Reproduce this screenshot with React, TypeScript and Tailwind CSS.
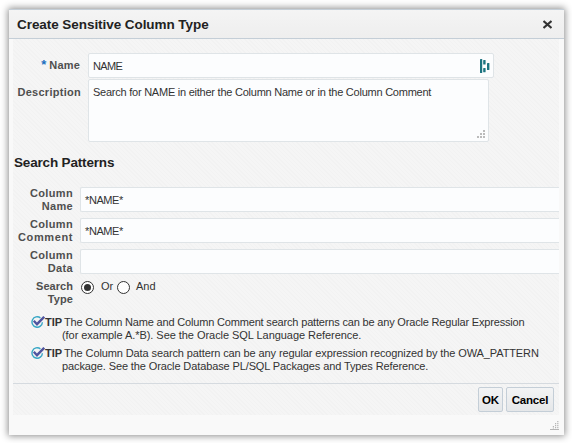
const stripes =
  "bg-[#f4f4f4] bg-[repeating-linear-gradient(45deg,#f2f2f2_0px,#f2f2f2_1px,#f5f5f5_1px,#f5f5f5_3px)]";

type Line = { text: string; tracking?: string };

function Label({ lines }: { lines: Line[] }) {
  return (
    <div className="w-[60px] shrink-0 text-right font-bold whitespace-nowrap text-[#4f4f4f]">
      {lines.map(({ text, tracking = "tracking-[0.35px]" }) => (
        <div key={text} className={tracking}>
          {text}
        </div>
      ))}
    </div>
  );
}

function PatternRow({ lines, value }: { lines: Line[]; value: string }) {
  return (
    <div className="flex h-[31px]">
      <Label lines={lines} />
      <div className="ml-[7px] flex h-[25px] flex-1 items-center rounded-l-[2px] border border-r-0 border-[#dfe4e7] bg-[#fcfdfe] pt-px pl-1 tracking-[-0.4px] text-[#333]">
        {value}
      </div>
    </div>
  );
}

function TipIcon() {
  return (
    <svg width="14" height="13" viewBox="0 0 14 13" fill="none" className="shrink-0">
      <path d="M9.4 1.9A5.2 5.2 0 1 0 11.4 6.2" stroke="#37a6c5" strokeWidth="1.4" />
      <path d="M2.8 4.8 6 8.2 13.2 .8" stroke="#4f559f" strokeWidth="2.4" />
    </svg>
  );
}

function Tip({ first, second }: { first: Line; second: Line }) {
  return (
    <div className="flex h-[31px] whitespace-nowrap text-[#333]">
      <TipIcon />
      <div>
        <div className="flex">
          <b className="w-[19px]">TIP</b>
          <span className={first.tracking}>{first.text}</span>
        </div>
        <div className={`pl-[17px] ${second.tracking}`}>{second.text}</div>
      </div>
    </div>
  );
}

function Radio({ checked }: { checked?: boolean }) {
  return (
    <span className="flex h-[13px] w-[13px] items-center justify-center rounded-full border border-[#333] bg-white">
      {checked && <span className="h-[7px] w-[7px] rounded-full bg-[#333]" />}
    </span>
  );
}

function Button({ children, width }: { children: string; width: string }) {
  return (
    <button
      className={`${width} flex h-[25px] items-center justify-center rounded-[2px] border border-[#c4ced7] bg-linear-to-b from-[#f3f4f5] to-[#e5e7e9] pt-px text-[11.5px] font-bold tracking-[-0.2px] text-black`}
    >
      {children}
    </button>
  );
}

export default function App() {
  return (
    <div className="h-[443px] w-[572px] overflow-hidden bg-white pt-[9px] pl-[9px] font-['Liberation_Sans',Arial,sans-serif] text-[11px] leading-[13px]">
      <div className="flex h-[426px] w-[555px] flex-col bg-[#f9f9f9] shadow-[0_0_7px_1px_rgba(0,0,0,0.45)]">
        <header className="flex h-[30px] shrink-0 items-center justify-between border-y border-[#c4ced7] bg-linear-to-b from-[#f4f4f4] to-[#eeeeee] pr-3 pl-2">
          <h1 className="text-[13.5px] font-bold tracking-[-0.06px] text-[#222]">Create Sensitive Column Type</h1>
          <svg width="9" height="9" viewBox="0 0 9 9" stroke="#333" strokeWidth="2.2">
            <path d="M.5 1 8.5 8M8.5 1 .5 8" />
          </svg>
        </header>

        <main className={`ml-1 flex h-[376px] w-[546px] shrink-0 flex-col ${stripes}`}>
          <div className="mt-[14px] flex h-[26px] shrink-0">
            <div className="mt-[6px] flex w-[67px] shrink-0 justify-end gap-[3px] font-bold text-[#4f4f4f]">
              <span className="-mt-px text-[13px] text-[#1a6fc0]">*</span>
              <span className="tracking-[0.2px]">Name</span>
            </div>
            <div className="ml-2 flex h-[25px] w-[406px] items-center justify-between rounded-[2px] border border-[#dfe4e7] bg-[#fcfdfe] pt-px pr-[3px] pl-1 tracking-[-0.65px] text-[#333]">
              NAME
              <svg width="10" height="14" viewBox="0 0 10 14" fill="#1c7480" className="-mt-px">
                <rect y="0" width="2.2" height="14" rx=".6" />
                <rect x="3.2" y="1" width="2.4" height="4.5" rx=".6" />
                <rect x="3.2" y="9" width="2.4" height="4.3" rx=".6" />
                <rect x="7" y="4" width="2.4" height="7" rx=".6" />
              </svg>
            </div>
          </div>
          <div className="flex h-[63px] shrink-0">
            <div className="mt-[7px] w-[68px] text-right font-bold tracking-[0.28px] text-[#4f4f4f]">Description</div>
            <div className="ml-[7px] flex h-[63px] w-[401px] flex-col justify-between rounded-[2px] border border-[#dfe4e7] bg-[#fcfdfe] pt-[6px] pr-[2px] pb-[2px] pl-1 whitespace-nowrap text-[#333]">
              <span className="tracking-[-0.24px]">Search for NAME in either the Column Name or in the Column Comment</span>
              <svg className="self-end" width="9" height="9" fill="#bbb">
                <path d="M6 0h2v2H6zM3 3h2v2H3zM6 3h2v2H6zM0 6h2v2H0zM3 6h2v2H3zM6 6h2v2H6z" />
              </svg>
            </div>
          </div>
          <h2 className="mt-[13px] h-[32px] shrink-0 pl-px text-[13.5px] leading-[16px] font-bold tracking-[-0.17px] text-[#222]">
            Search Patterns
          </h2>
          <PatternRow lines={[{ text: "Column" }, { text: "Name" }]} value="*NAME*" />
          <PatternRow lines={[{ text: "Column" }, { text: "Comment", tracking: "tracking-[0.6px]" }]} value="*NAME*" />
          <PatternRow lines={[{ text: "Column" }, { text: "Data" }]} value="" />
          <div className="flex h-[36px] text-[#333]">
            <Label
              lines={[
                { text: "Search", tracking: "tracking-[0.05px]" },
                { text: "Type", tracking: "tracking-[0.1px]" },
              ]}
            />
            <div className="ml-2 flex h-[15px] items-center">
              <Radio checked />
              <span className="mb-[2px] ml-[7px] w-[16px]">Or</span>
              <Radio />
              <span className="mb-[2px] ml-[6px]">And</span>
            </div>
          </div>
          <div className="pl-[18px]">
            <Tip
              first={{
                text: "The Column Name and Column Comment search patterns can be any Oracle Regular Expression",
                tracking: "tracking-[-0.175px]",
              }}
              second={{
                text: "(for example A.*B). See the Oracle SQL Language Reference.",
                tracking: "tracking-[-0.05px]",
              }}
            />
            <Tip
              first={{
                text: "The Column Data search pattern can be any regular expression recognized by the OWA_PATTERN",
                tracking: "tracking-[-0.11px]",
              }}
              second={{
                text: "package. See the Oracle Database PL/SQL Packages and Types Reference.",
                tracking: "tracking-[-0.115px]",
              }}
            />
          </div>
          <footer className="mt-auto flex h-[32px] shrink-0 justify-end gap-[3px] border-t border-[#d5dadf] pt-[3px] pr-[5px]">
            <Button width="w-[25px]">OK</Button>
            <Button width="w-[48px]">Cancel</Button>
          </footer>
        </main>
        <div className="flex h-5 items-center justify-end pr-[5px]">
          <svg width="9" height="9" fill="#b5b5b5">
            <path d="M7.2 0h1.2v1.3H7.2zM7.2 2h1.2v1.3H7.2zM7.2 4h1.2v1.3H7.2zM7.2 6h1.2v1.3H7.2zM5 2h1.2v1.3H5zM5 4h1.2v1.3H5zM5 6h1.2v1.3H5zM2.8 5h1.2v1H2.8zM2.8 6.5h1.2v1H2.8zM0 8h9v1H0z" />
          </svg>
        </div>
      </div>
    </div>
  );
}
